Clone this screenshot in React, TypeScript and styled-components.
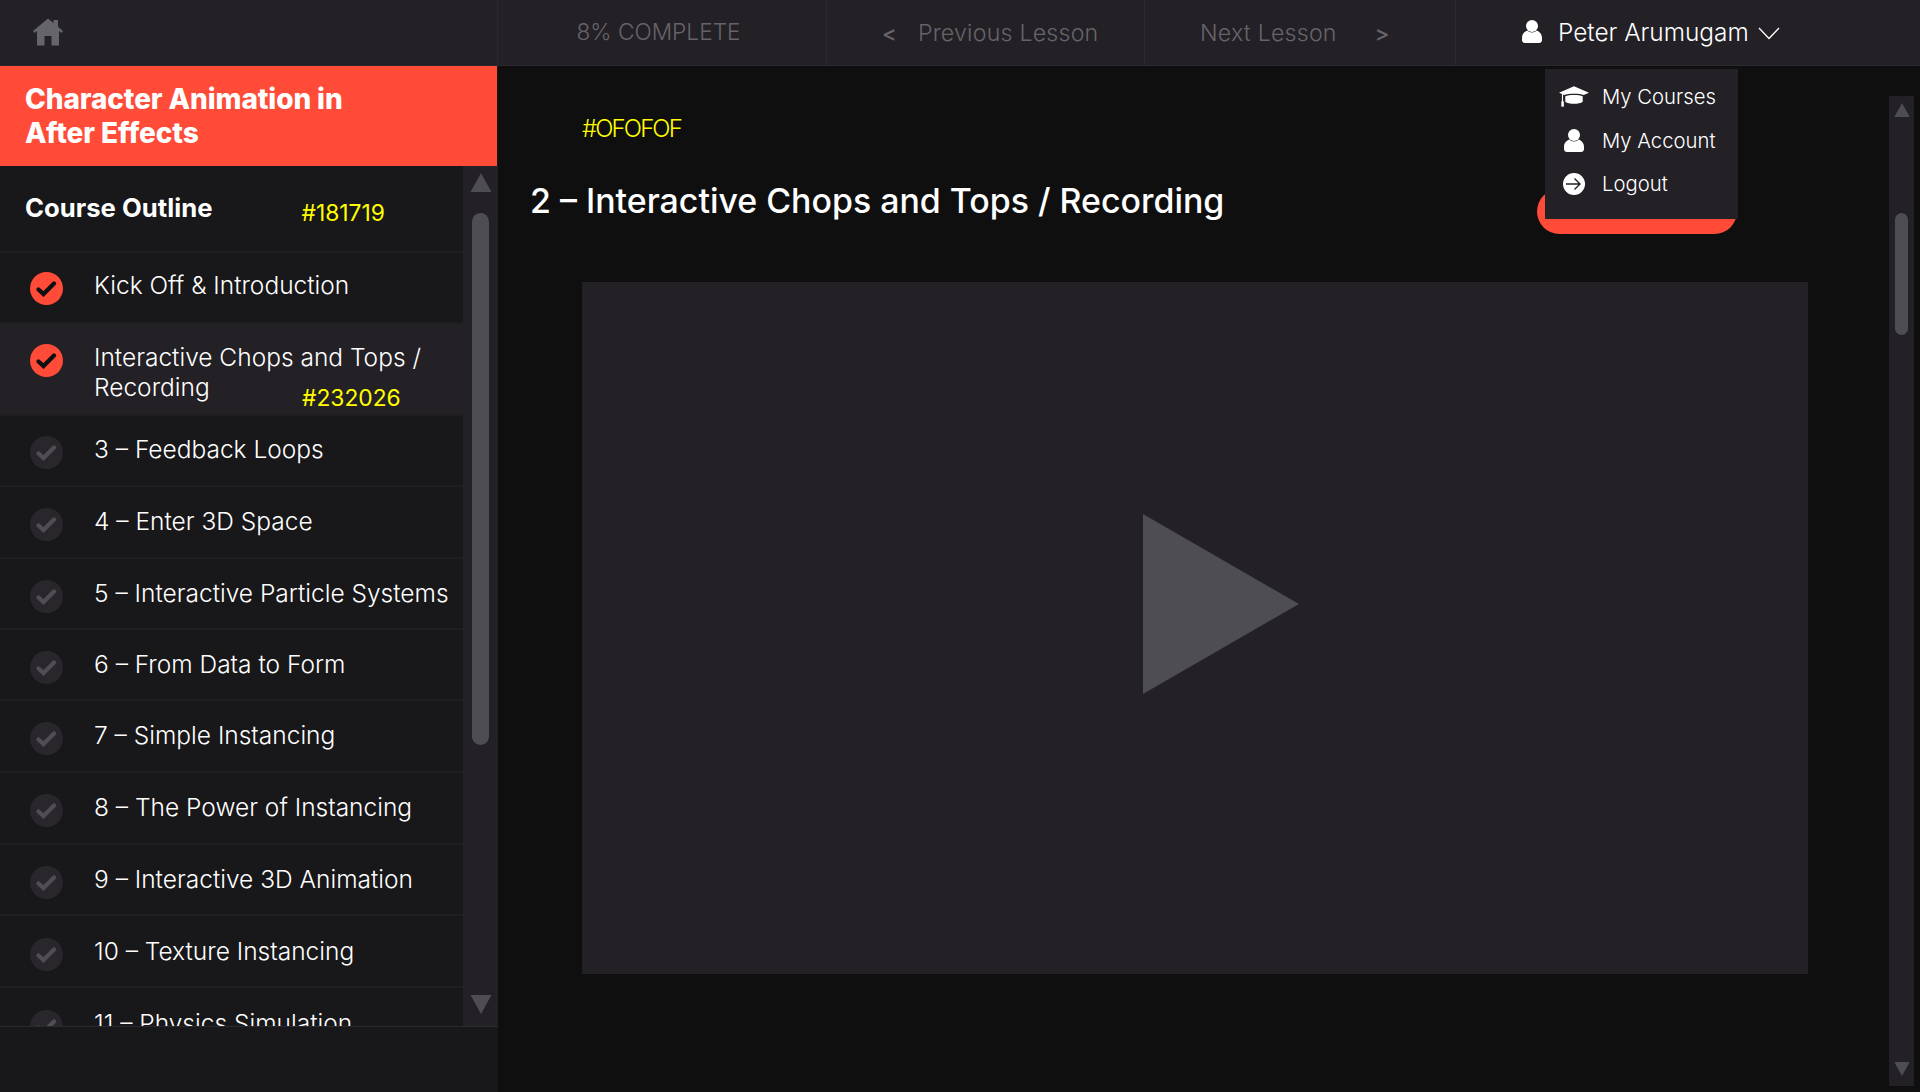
import React from "react";
import styled, { createGlobalStyle } from "styled-components";

const Global = createGlobalStyle`
  html, body { margin: 0; padding: 0; background: #0f0f0f; }
  body { font-family: Inter, "Liberation Sans", sans-serif; color: #fff; overflow: hidden; }
  * { box-sizing: border-box; }
`;

const Page = styled.div`
  width: 1920px; height: 1092px; display: flex; flex-direction: column; overflow: hidden; position: relative;
`;
const TopBar = styled.header`
  height: 66px; flex: none; display: flex; background: #232026; border-bottom: 1px solid #2b282f;
`;
const HomeCell = styled.div`
  width: 498px; flex: none; display: flex; align-items: center; padding: 0 0 1px 33px; border-right: 1px solid #2b282f;
`;
const ProgressCell = styled.div`
  width: 329px; flex: none; display: flex; align-items: center; justify-content: center; padding: 0 7px 3px 0;
  border-right: 1px solid #2b282f; color: #666469; font-size: 22.7px; font-weight: 300;
`;
const NavCell = styled.div<{ $w: number; $pad: number; $gap: number }>`
  width: ${p => p.$w}px; flex: none; display: flex; align-items: center; padding-left: ${p => p.$pad}px; gap: ${p => p.$gap}px;
  border-right: 1px solid #2b282f; color: #666469; font-size: 23.2px; font-weight: 300; letter-spacing: .2px;
`;
const Angle = styled.span`font-size: 22px; font-weight: 500;`;
const UserCell = styled.div`
  flex: 1; display: flex; align-items: center; padding: 0 0 2px 66px; gap: 16px; font-size: 24.4px; font-weight: 300; color: #fff;
`;
const Chevron = styled.svg`margin-left: -7px; margin-top: 4px;`;

const Body = styled.div`flex: 1; display: flex; min-height: 0;`;
const Sidebar = styled.aside`
  width: 498px; flex: none; display: flex; flex-direction: column; background: #181719;
`;
const CourseHeader = styled.div`
  height: 100px; flex: none; margin-right: 1px; background: #ff4b37; padding: 16px 0 0 25px;
  font-size: 28px; line-height: 34px; font-weight: 800; color: #fff; letter-spacing: -.1px;
`;
const OutlinePanel = styled.div`flex: 1; min-height: 0; display: flex;`;
const OutlineList = styled.div`flex: 1; min-width: 0; overflow: hidden;`;
const OutlineHead = styled.div`
  height: 87px; display: flex; align-items: flex-start; padding: 26px 0 0 25px; border-bottom: 2px solid #1f1e21;
  font-size: 25.7px; line-height: 32px; font-weight: 700;
`;
const Note = styled.span`
  color: #ffff00; font-size: 22.8px; font-weight: 400; line-height: 30px;
`;
const HeadNote = styled(Note)`margin: 6px 0 0 89px;`;
const Row = styled.div<{ $active?: boolean; $h: number; $pad: number }>`
  height: ${p => p.$h}px; display: flex; align-items: flex-start; padding: ${p => p.$pad}px 0 0 30px; gap: 31px;
  position: relative; overflow: hidden;
  background: ${p => (p.$active ? "#232026" : "transparent")};
  border-bottom: 2px solid #1f1e21;
  font-size: 24.5px; line-height: 30px; font-weight: 300; color: #fff;
`;
const RowText = styled.span`flex: 1;`;
const RowNote = styled(Note)`position: absolute; left: 302px; top: 59px;`;
const Check = styled.span<{ $done?: boolean }>`
  width: 33px; height: 33px; flex: none; border-radius: 50%; display: flex; align-items: center; justify-content: center;
  margin-top: 2px; background: ${p => (p.$done ? "#ff4b37" : "#29272c")};
  color: ${p => (p.$done ? "#0f0f0f" : "#504e54")};
`;
const SideTrack = styled.div`
  width: 35px; flex: none; background: #232026; display: flex; flex-direction: column; align-items: center; padding-top: 7px;
`;
const SideThumb = styled.div`
  width: 17px; height: 532px; margin: 21px 0 0 0; border-radius: 9px; background: #4f4d54; flex: none;
`;
const SideDown = styled.div`margin-top: 250px;`;
const SideFoot = styled.div`height: 66px; flex: none; border-top: 1px solid #2b282f; background: #181719;`;

const Main = styled.main`flex: 1; min-width: 0; display: flex; background: #0f0f0f;`;
const Content = styled.div`flex: 1; min-width: 0; padding: 48px 0 0 32px;`;
const MainNote = styled(Note)`display: block; margin-left: 52px; font-size: 24px; font-weight: 300; letter-spacing: -1.9px;`;
const TitleRow = styled.div`
  display: flex; justify-content: space-between; align-items: flex-start; margin-top: 34px; height: 104px; padding-right: 152px;
`;
const Title = styled.h1`
  margin: 0; font-size: 33.9px; line-height: 46px; font-weight: 500; color: #fff;
`;
const RedButton = styled.div`
  width: 200px; height: 45px; margin-top: 11px; border-radius: 26px; background: #ff4b37;
`;
const Video = styled.div`
  width: 1226px; height: 692px; margin-left: 52px; background: #232026; display: flex; align-items: center; justify-content: center;
`;
const PlayGlyph = styled.svg`margin: -49px 0 0 51px;`;
const MainTrack = styled.div`
  width: 25px; flex: none; margin: 30px 6px 6px 0; background: #232026; display: flex; flex-direction: column; align-items: center; padding-top: 7px;
`;
const MainThumb = styled.div`width: 13px; height: 122px; margin-top: 96px; flex: none; border-radius: 7px; background: #4f4d54;`;
const MainDown = styled.div`margin-top: auto; margin-bottom: 6px;`;

const Dropdown = styled.nav`
  position: absolute; left: 1545px; top: 69px; width: 193px; height: 150px; background: #232026; padding: 6px 0 0 14px;
`;
const MenuItem = styled.div`
  display: flex; align-items: center; height: 43.5px; font-size: 20.3px; font-weight: 300; color: #fff;
`;
const MenuIcon = styled.span`width: 30px; display: flex; justify-content: center; margin-right: 13px; flex: none;`;

const HomeIcon = () => (
  <svg width="30" height="28" viewBox="0 0 30 28"><path fill="#66656a" d="M15 0.5 L20.5 5 V2 H25 V8.7 L30 13 L28.5 15 L26 13 V27.5 H18.5 V18 H11.5 V27.5 H4 V13 L1.5 15 L0 13 Z" /></svg>
);
const UserIcon = () => (
  <svg width="20" height="23" viewBox="0 0 20 23"><circle cx="10" cy="6" r="6" fill="#fff" /><path fill="#fff" d="M5.2 10.5 C7.5 13 12.5 13 14.8 10.5 C17.8 11.8 20 14 20 18 V20 C20 21.7 18.7 23 17 23 H3 C1.3 23 0 21.7 0 20 V18 C0 14 2.2 11.8 5.2 10.5 Z" /></svg>
);
const CapIcon = () => (
  <svg width="31" height="21" viewBox="0 0 31 21"><path fill="#fff" d="M15.5 0 L31 6.5 L25.5 8.9 C22 7.2 9 7.2 5.5 8.9 L0 6.5 Z" /><path fill="#fff" d="M6.5 10.3 C10 8.6 21 8.6 24.5 10.3 V16 C21 18.8 10 18.8 6.5 16 Z" /><rect x="3" y="8" width="1.2" height="8" fill="#fff" /><rect x="2.4" y="15.5" width="2.6" height="5.5" fill="#fff" /></svg>
);
const LogoutIcon = () => (
  <svg width="22" height="22" viewBox="0 0 22 22"><circle cx="11" cy="11" r="11" fill="#fff" /><path d="M3 11 H17 M11.5 5.5 L17 11 L11.5 16.5" fill="none" stroke="#232026" strokeWidth="1.4" /></svg>
);
const CheckGlyph = () => (
  <svg width="21" height="17" viewBox="0 0 21 17"><path d="M2.5 9.5 L7.5 14 L18 3.5" fill="none" stroke="currentColor" strokeWidth="4.2" strokeLinecap="round" strokeLinejoin="miter" /></svg>
);
const TriUp = ({ w, h }: { w: number; h: number }) => (
  <svg width={w} height={h} viewBox="0 0 22 20"><path d="M11 0 L22 20 H0 Z" fill="#4f4d54" /></svg>
);
const TriDown = ({ w, h }: { w: number; h: number }) => (
  <svg width={w} height={h} viewBox="0 0 22 20"><path d="M0 0 H22 L11 20 Z" fill="#4f4d54" /></svg>
);

const lessons: { t: string; done?: boolean; active?: boolean; note?: string; h: number; pad: number }[] = [
  { t: "Kick Off & Introduction", done: true, h: 71, pad: 17 },
  { t: "Interactive Chops and Tops / Recording", done: true, active: true, note: "#232026", h: 92, pad: 18 },
  { t: "3 – Feedback Loops", h: 71, pad: 18 },
  { t: "4 – Enter 3D Space", h: 72, pad: 19 },
  { t: "5 – Interactive Particle Systems", h: 71, pad: 19 },
  { t: "6 – From Data to Form", h: 71, pad: 19 },
  { t: "7 – Simple Instancing", h: 72, pad: 19 },
  { t: "8 – The Power of Instancing", h: 72, pad: 19 },
  { t: "9 – Interactive 3D Animation", h: 71, pad: 19 },
  { t: "10 – Texture Instancing", h: 72, pad: 20 },
  { t: "11 – Physics Simulation", h: 71, pad: 20 },
];

export default function App() {
  return (
    <Page>
      <Global />
      <TopBar>
        <HomeCell><HomeIcon /></HomeCell>
        <ProgressCell>8% COMPLETE</ProgressCell>
        <NavCell $w={318} $pad={55} $gap={21}><Angle>&lt;</Angle><span>Previous Lesson</span></NavCell>
        <NavCell $w={311} $pad={55} $gap={38}><span>Next Lesson</span><Angle>&gt;</Angle></NavCell>
        <UserCell>
          <UserIcon />
          <span>Peter Arumugam</span>
          <Chevron width="22" height="13" viewBox="0 0 22 13"><path d="M1 1 L11 11.5 L21 1" fill="none" stroke="#fff" strokeWidth="1.3" /></Chevron>
        </UserCell>
      </TopBar>
      <Body>
        <Sidebar>
          <CourseHeader>Character Animation in<br />After Effects</CourseHeader>
          <OutlinePanel>
            <OutlineList>
              <OutlineHead>Course Outline<HeadNote>#181719</HeadNote></OutlineHead>
              {lessons.map(l => (
                <Row key={l.t} $active={l.active} $h={l.h} $pad={l.pad}>
                  <Check $done={l.done}><CheckGlyph /></Check>
                  <RowText>{l.t}</RowText>
                  {l.note && <RowNote>{l.note}</RowNote>}
                </Row>
              ))}
            </OutlineList>
            <SideTrack>
              <TriUp w={22} h={19} />
              <SideThumb />
              <SideDown><TriDown w={22} h={19} /></SideDown>
            </SideTrack>
          </OutlinePanel>
          <SideFoot />
        </Sidebar>
        <Main>
          <Content>
            <MainNote>#OFOFOF</MainNote>
            <TitleRow>
              <Title>2 – Interactive Chops and Tops / Recording</Title>
              <RedButton />
            </TitleRow>
            <Video>
              <PlayGlyph width="156" height="180" viewBox="0 0 156 180"><path d="M0 0 L156 90 L0 180 Z" fill="#4f4d54" /></PlayGlyph>
            </Video>
          </Content>
          <MainTrack>
            <TriUp w={16} h={14} />
            <MainThumb />
            <MainDown><TriDown w={16} h={14} /></MainDown>
          </MainTrack>
        </Main>
      </Body>
      <Dropdown>
        <MenuItem><MenuIcon><CapIcon /></MenuIcon>My Courses</MenuItem>
        <MenuItem><MenuIcon><UserIcon /></MenuIcon>My Account</MenuItem>
        <MenuItem><MenuIcon><LogoutIcon /></MenuIcon>Logout</MenuItem>
      </Dropdown>
    </Page>
  );
}
